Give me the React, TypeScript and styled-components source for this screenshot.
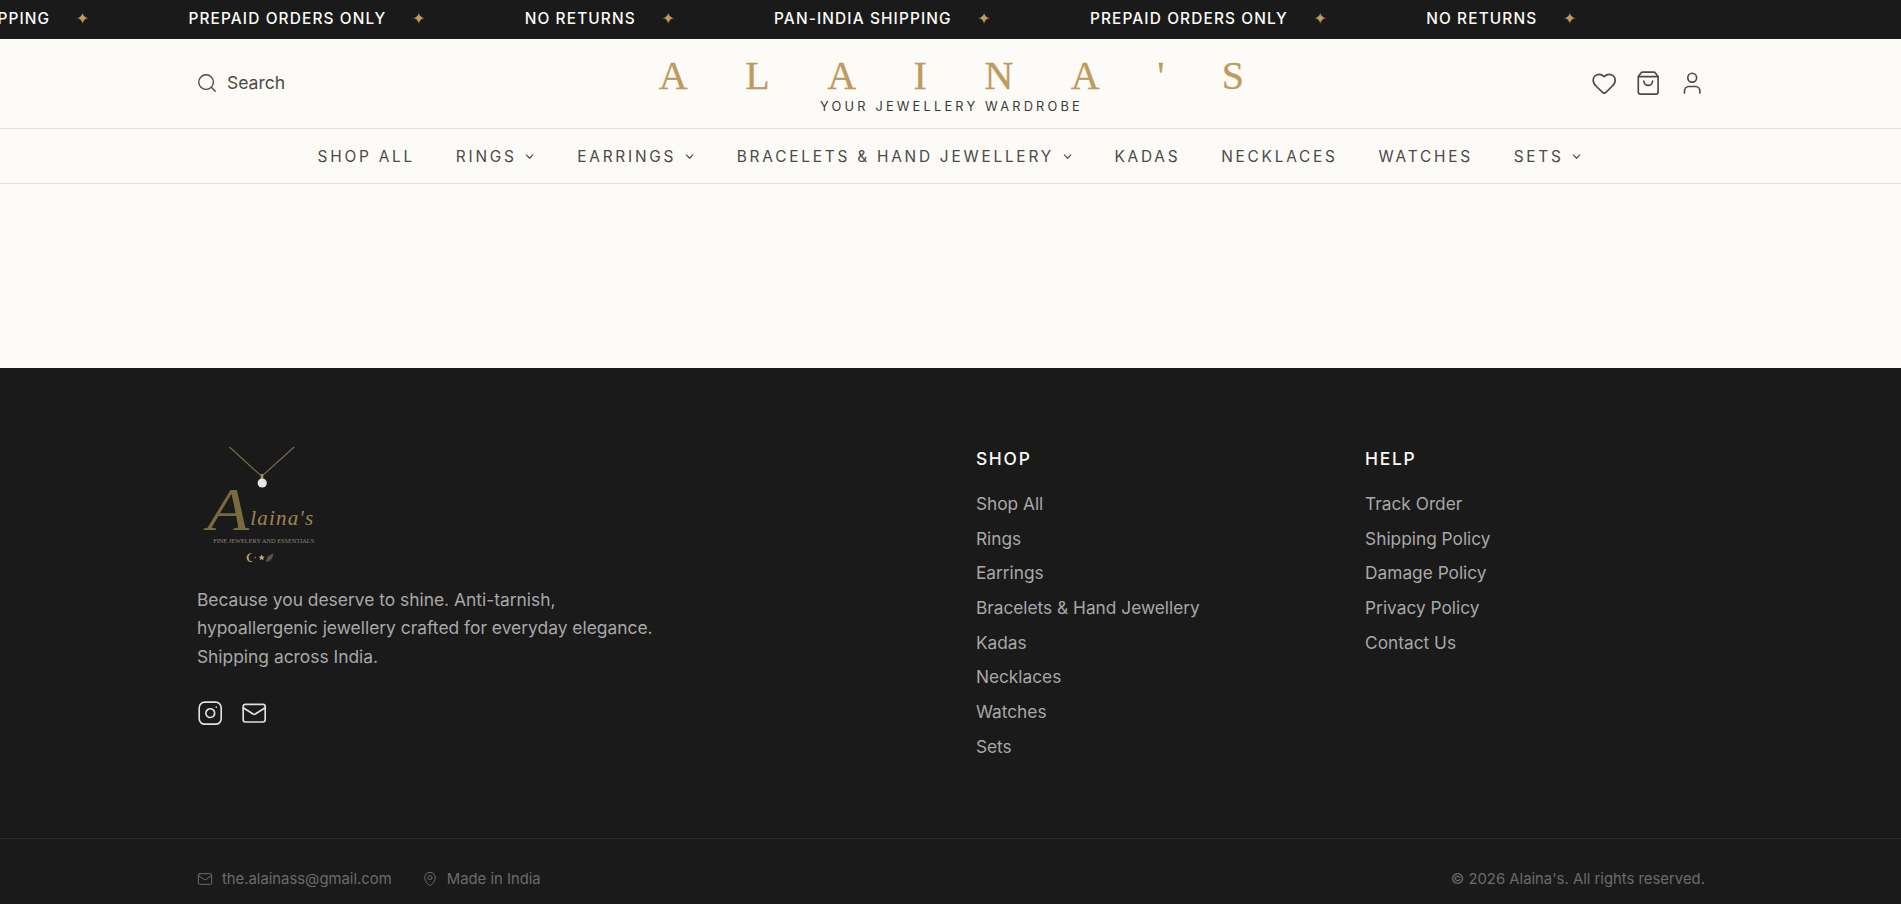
import React from "react";
import styled, { createGlobalStyle } from "styled-components";
import { Search, Heart, ShoppingBag, User, ChevronDown, Instagram, Mail, MapPin } from "lucide-react";

const Global = createGlobalStyle`
  html, body { margin: 0; padding: 0; background: #fdfbf7; }
  body { font-family: Inter, "Liberation Sans", sans-serif; overflow-x: hidden; }
  * { box-sizing: border-box; }
  a { color: inherit; text-decoration: none; }
  ul { list-style: none; margin: 0; padding: 0; }
`;

const Page = styled.div`
  width: 100%;
  height: 904px;
  overflow: hidden;
  display: flex;
  flex-direction: column;
  background: #fdfbf7;
`;

const Announcement = styled.div`
  height: 39px;
  padding-bottom: 1px;
  background: #1a1a1a;
  overflow: hidden;
  display: flex;
  align-items: center;
`;

const Track = styled.div`
  display: flex;
  margin-left: -127.5px;
  white-space: nowrap;
`;

const TickerItem = styled.span`
  display: inline-flex;
  align-items: center;
  gap: 25.6px;
  padding-right: 99.2px;
  color: #fdfbf7;
  font-size: 15.4px;
  line-height: 20px;
  font-weight: 500;
  letter-spacing: 0.074em;
`;

const Spark = styled.span`
  color: #c19a5b;
  font-size: 16px;
  letter-spacing: 0;
  font-family: "DejaVu Sans", sans-serif;
`;

const Masthead = styled.header`
  height: 90px;
  border-bottom: 1px solid #e8e0d2;
`;

const Container = styled.div`
  width: 1544px;
  margin: 0 auto;
  padding: 0 17.6px;
`;

const MastRow = styled(Container)`
  height: 100%;
  display: grid;
  grid-template-columns: 1fr auto 1fr;
  align-items: center;
`;

const SearchButton = styled.button`
  display: flex;
  align-items: center;
  gap: 8.8px;
  margin-bottom: 2px;
  padding: 0;
  border: 0;
  background: none;
  color: #4a4a4a;
  font: 400 17.6px/24px Inter, sans-serif;
`;

const Brand = styled.a`
  display: flex;
  flex-direction: column;
  align-items: center;
  padding: 2px 0 0 2px;
`;

const Wordmark = styled.span`
  font-family: "Liberation Serif", serif;
  font-size: 40px;
  line-height: 44px;
  letter-spacing: 57.5px;
  margin: 0 -57.5px 1.5px 0;
  color: #c09a5c;
  -webkit-text-stroke: 0.3px #c09a5c;
`;

const Tagline = styled.span`
  font-size: 12.8px;
  line-height: 16px;
  letter-spacing: 0.25em;
  color: #3a3a3a;
`;

const ActionRow = styled.div`
  display: flex;
  justify-content: flex-end;
  align-items: center;
  gap: 17.6px;
  margin-bottom: 1px;
  color: #4a4a4a;
`;

const NavBar = styled.nav`
  height: 55px;
  padding-top: 1px;
  border-bottom: 1px solid #e6e2d6;
`;

const NavList = styled.ul`
  height: 100%;
  display: flex;
  justify-content: center;
  align-items: center;
  gap: 40.8px;
`;

const NavItem = styled.li`
  display: flex;
  align-items: center;
  gap: 6.6px;
  font-size: 15.4px;
  line-height: 20px;
  letter-spacing: 0.18em;
  color: #4a4a4a;
`;

const Main = styled.main`
  height: 184px;
  flex: none;
`;

const Footer = styled.footer`
  flex: 1;
  background: #1a1a1a;
  display: flex;
  flex-direction: column;
`;

const FooterBody = styled.div`
  height: 471px;
  border-bottom: 1px solid #2a2a2a;
`;

const FooterGrid = styled(Container)`
  display: grid;
  grid-template-columns: 779px 389.2px 1fr;
  padding-top: 64px;
  padding-left: 18.4px;
`;

const About = styled.div`
  display: flex;
  flex-direction: column;
  align-items: flex-start;
`;

const Logo = styled.svg`
  display: block;
  margin-bottom: 22px;
`;

const Blurb = styled.p`
  margin: 0 0 28.8px;
  width: 470px;
  font-size: 17.4px;
  line-height: 28.4px;
  color: #a8a8a8;
`;

const Socials = styled.div`
  display: flex;
  gap: 18px;
  color: #e0e0e0;
`;

const LinkColumn = styled.div`
  padding-top: 15px;
`;

const ColumnTitle = styled.h4`
  margin: 0 0 22px;
  font-size: 17.4px;
  line-height: 24px;
  font-weight: 500;
  letter-spacing: 0.1em;
  color: #fdfbf7;
`;

const LinkList = styled.ul`
  display: flex;
  flex-direction: column;
  gap: 12px;
`;

const LinkItem = styled.li`
  font-size: 17.3px;
  line-height: 22.65px;
  color: #a8a8a8;
`;

const BottomRow = styled(Container)`
  flex: 1;
  padding-top: 14px;
  padding-left: 18.4px;
  display: flex;
  justify-content: space-between;
  align-items: center;
  font-size: 14.85px;
  line-height: 20px;
  color: #6b6b6b;
`;

const ContactGroup = styled.div`
  display: flex;
  gap: 30px;
`;

const Contact = styled.span`
  display: flex;
  align-items: center;
  gap: 9px;
`;

const ticker = ["PAN-INDIA SHIPPING", "PREPAID ORDERS ONLY", "NO RETURNS", "PAN-INDIA SHIPPING", "PREPAID ORDERS ONLY", "NO RETURNS"];
const navItems: [string, boolean][] = [
  ["SHOP ALL", false], ["RINGS", true], ["EARRINGS", true], ["BRACELETS & HAND JEWELLERY", true],
  ["KADAS", false], ["NECKLACES", false], ["WATCHES", false], ["SETS", true],
];
const shop = ["Shop All", "Rings", "Earrings", "Bracelets & Hand Jewellery", "Kadas", "Necklaces", "Watches", "Sets"];
const help = ["Track Order", "Shipping Policy", "Damage Policy", "Privacy Policy", "Contact Us"];

const BrandLogo = () => (
  <Logo width="120" height="132" viewBox="-1.2 0 120 132">
    <path d="M31.3 15 L62 43 L65 43 L96 15" fill="none" stroke="#7d6d4c" strokeWidth="1.1" />
    <rect x="62.5" y="42" width="2.6" height="5" fill="#a58a55" />
    <circle cx="64" cy="51" r="4.6" fill="#e6e6e6" />
    <text x="9" y="98" fontFamily="'Liberation Serif', serif" fontStyle="italic" fontSize="62" fill="#7a6a42" textLength="42" lengthAdjust="spacingAndGlyphs">A</text>
    <text x="52" y="93" fontFamily="'Liberation Serif', serif" fontStyle="italic" fontSize="21" fill="#9c8650" textLength="63" lengthAdjust="spacing">laina's</text>
    <text x="15" y="111" fontFamily="'Liberation Serif', serif" fontSize="5.4" fill="#8a8578" textLength="101" lengthAdjust="spacingAndGlyphs">FINE JEWELERY AND ESSENTIALS</text>
    <path d="M54 121.5a4.4 4.4 0 1 0 1 8a3.6 3.6 0 0 1-1-8z" fill="#b89c5e" />
    <circle cx="57" cy="125.5" r="0.7" fill="#b89c5e" />
    <path d="M63.5 122.5l.9 2 2.1.2-1.6 1.4.5 2.1-1.9-1.1-1.9 1.1.5-2.1-1.6-1.4 2.1-.2z" fill="#c9b070" />
    <path d="M68 130c0-4 2-7 7-8.5 0 4.5-2 7.5-7 8.5z" fill="#59544a" />
  </Logo>
);

export default function App() {
  return (
    <Page>
      <Global />
      <Announcement>
        <Track>
          {ticker.map((t, i) => (
            <TickerItem key={i}>{t}<Spark>✦</Spark></TickerItem>
          ))}
        </Track>
      </Announcement>
      <Masthead>
        <MastRow>
          <SearchButton><Search size={22} strokeWidth={1.5} />Search</SearchButton>
          <Brand>
            <Wordmark>ALAINA'S</Wordmark>
            <Tagline>YOUR JEWELLERY WARDROBE</Tagline>
          </Brand>
          <ActionRow>
            <Heart size={26.4} strokeWidth={1.5} />
            <ShoppingBag size={26.4} strokeWidth={1.5} />
            <User size={26.4} strokeWidth={1.5} />
          </ActionRow>
        </MastRow>
      </Masthead>
      <NavBar>
        <NavList>
          {navItems.map(([label, more]) => (
            <NavItem key={label}>{label}{more && <ChevronDown size={13.2} />}</NavItem>
          ))}
        </NavList>
      </NavBar>
      <Main />
      <Footer>
        <FooterBody>
          <FooterGrid>
            <About>
              <BrandLogo />
              <Blurb>Because you deserve to shine. Anti-tarnish, hypoallergenic jewellery crafted for everyday elegance. Shipping across India.</Blurb>
              <Socials>
                <Instagram size={26.4} strokeWidth={1.5} />
                <Mail size={26.4} strokeWidth={1.5} />
              </Socials>
            </About>
            <LinkColumn>
              <ColumnTitle>SHOP</ColumnTitle>
              <LinkList>{shop.map((s) => <LinkItem key={s}>{s}</LinkItem>)}</LinkList>
            </LinkColumn>
            <LinkColumn>
              <ColumnTitle>HELP</ColumnTitle>
              <LinkList>{help.map((s) => <LinkItem key={s}>{s}</LinkItem>)}</LinkList>
            </LinkColumn>
          </FooterGrid>
        </FooterBody>
        <BottomRow>
          <ContactGroup>
            <Contact><Mail size={16} strokeWidth={1.5} />the.alainass@gmail.com</Contact>
            <Contact><MapPin size={16} strokeWidth={1.5} />Made in India</Contact>
          </ContactGroup>
          <span>© 2026 Alaina's. All rights reserved.</span>
        </BottomRow>
      </Footer>
    </Page>
  );
}
